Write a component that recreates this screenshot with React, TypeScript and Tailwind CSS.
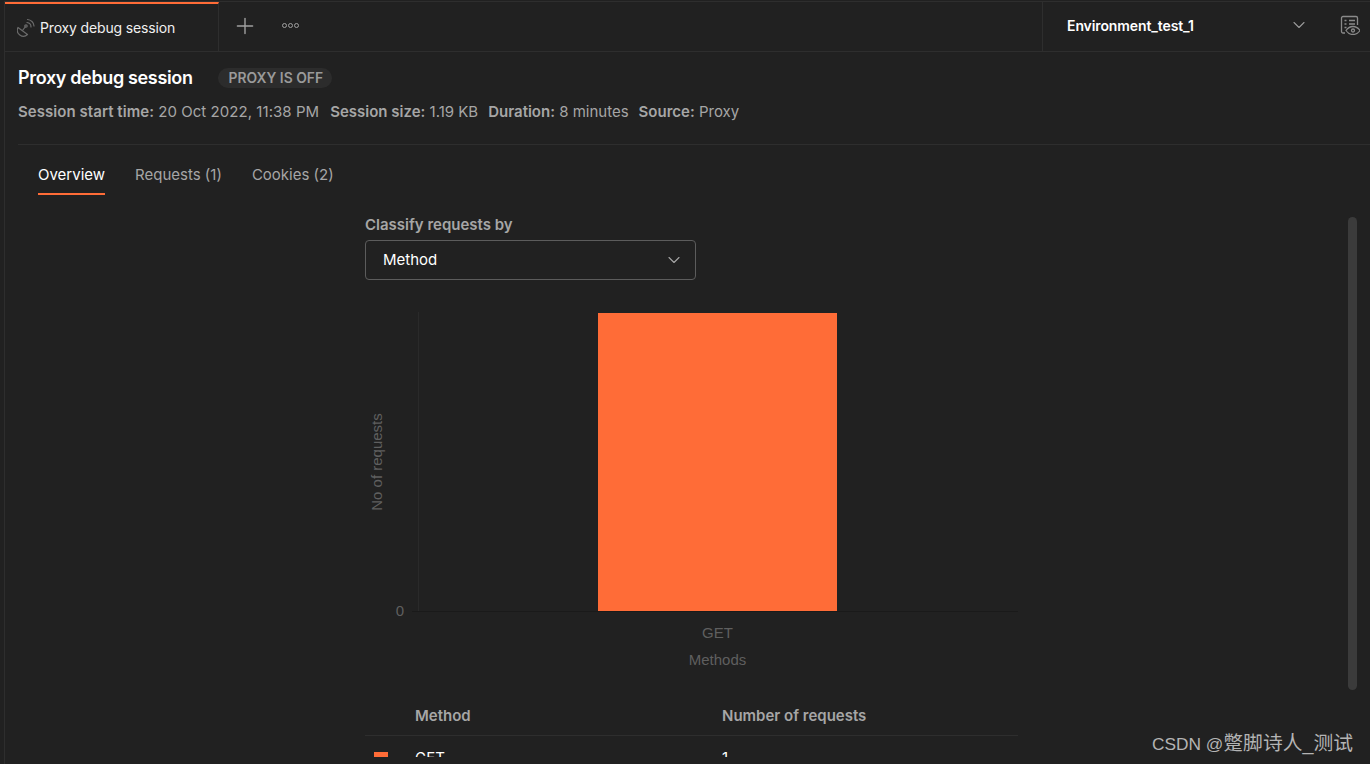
import React from 'react';
import { ChevronDown, Plus } from 'lucide-react';

const inter = { fontFamily: 'Inter, "Liberation Sans", sans-serif' };

const SatelliteIcon = () => (
  <svg width="20" height="20" viewBox="0 0 20 20" fill="none" stroke="#6b6b6b" strokeWidth="1.2">
    <path d="M1 9.500L10.500 16.500A6 6 0 0 1 1 9.500Z" strokeLinejoin="round" />
    <path d="M5.500 12.500l3-4" />
    <circle cx="9" cy="8" r="1.200" />
    <path d="M10 4.500a4.500 4.500 0 0 1 4 4.500M10.500 1.500a7 7 0 0 1 6.500 6.500" strokeLinecap="round" />
  </svg>
);

const EnvironmentEyeIcon = () => (
  <svg width="20" height="20" viewBox="0 0 20 20" fill="none" stroke="#8a8a8a" strokeWidth="1.3">
    <path d="M5 18H3a1.500 1.500 0 0 1-1.500-1.500V3A1.500 1.500 0 0 1 3 1.500h13A1.500 1.500 0 0 1 17.500 3v7" />
    <path d="M4.500 5.500h2M9 5.500h6M4.500 9h2M9 9h6M4.500 12.500h2" />
    <path d="M6 15.500c1.800-2.600 4.200-4 7-4s5.200 1.400 7 4c-1.800 2.600-4.200 4-7 4s-5.200-1.400-7-4Z" fill="#212121" />
    <circle cx="13" cy="15.500" r="1.500" />
  </svg>
);

const BarChart = () => (
  <svg width="653" height="372" viewBox="0 0 653 372" className="block" style={{ fontFamily: '"Liberation Sans", Arial, sans-serif' }}>
    <line x1="53.500" y1="10" x2="53.500" y2="309" stroke="#2a2a2a" />
    <line x1="47" y1="309.500" x2="653" y2="309.500" stroke="#1a1a1a" />
    <rect x="233" y="11" width="239" height="298" fill="#ff6c37" />
    <text x="35" y="314" textAnchor="middle" fontSize="15" fill="#5f5f5f">0</text>
    <text x="352.500" y="336" textAnchor="middle" fontSize="15" fill="#5f5f5f">GET</text>
    <text x="352.500" y="363" textAnchor="middle" fontSize="15" fill="#5f5f5f">Methods</text>
    <text transform="translate(17 160) rotate(-90)" textAnchor="middle" fontSize="15" fill="#5f5f5f">No of requests</text>
  </svg>
);

export default function App() {
  return (
    <div className="relative h-[764px] w-[1370px] overflow-hidden bg-[#212121] pl-[4px] pt-[1px] antialiased" style={inter}>
      <div className="h-[763px] border-l border-t border-[#2e2e2e]">
        <div className="relative h-[755px] overflow-hidden">
          {/* Top bar */}
          <div className="flex h-[50px] border-b border-[#2e2e2e]">
            <div className="flex h-[50px] w-[214px] items-center gap-[3px] border-r border-t-2 border-r-[#2e2e2e] border-t-[#ff6c37] pb-[1px] pl-[12px]">
              <SatelliteIcon />
              <span className="text-[14px] tracking-[-0.15px] text-[#f0f0f0]">Proxy debug session</span>
            </div>
            <div className="flex w-[823px] items-center pb-[2px] pl-[13px]">
              <Plus size={26} strokeWidth={1.3} className="text-[#a0a0a0]" />
              <div className="ml-[24px] flex gap-[1px]">
                <span className="h-[5px] w-[5px] rounded-full border border-[#a0a0a0]" />
                <span className="h-[5px] w-[5px] rounded-full border border-[#a0a0a0]" />
                <span className="h-[5px] w-[5px] rounded-full border border-[#a0a0a0]" />
              </div>
            </div>
            <div className="flex flex-1 items-center border-l border-[#2e2e2e] pb-[3px] pl-[24px]">
              <span className="w-[222px] text-[14px] font-semibold tracking-[-0.1px] text-white">Environment_test_1</span>
              <ChevronDown size={20} strokeWidth={1.3} className="text-[#9a9a9a]" />
              <div className="ml-[31px]">
                <EnvironmentEyeIcon />
              </div>
            </div>
          </div>

          {/* Session header */}
          <div className="pl-[13px]">
            <div className="flex items-center pt-[14px]">
              <h1 className="text-[18px] leading-[24px] font-semibold tracking-[-0.35px] text-white">Proxy debug session</h1>
              <span className="ml-[25px] rounded-full bg-[#2c2c2c] pl-[11px] pr-[9px] text-[13.850px] leading-[20px] font-semibold text-[#9a9a9a]">
                PROXY IS OFF
              </span>
            </div>
            <div className="mt-[12px] flex gap-[10px] text-[15px] leading-[20px] text-[#a6a6a6]">
              <p className="mr-[1px] tracking-[0.05px]"><span className="font-semibold">Session start time:</span> 20 Oct 2022, 11:38 PM</p>
              <p><span className="font-semibold">Session size:</span> 1.19 KB</p>
              <p><span className="font-semibold">Duration:</span> 8 minutes</p>
              <p><span className="font-semibold">Source:</span> Proxy</p>
            </div>
            <div className="mt-[22px] h-px bg-[#2e2e2e]" />

            {/* Tabs */}
            <div className="flex gap-[30px] pl-[20px] pt-[20px] text-[15px] leading-[20px]">
              <div className="border-b-2 border-[#ff6c37] pb-[8px] text-white">Overview</div>
              <div className="text-[#a6a6a6]">Requests (1)</div>
              <div className="text-[#a6a6a6]">Cookies (2)</div>
            </div>
          </div>

          {/* Overview */}
          <div className="ml-[360px] mt-[20px] w-[653px]">
            <div className="text-[15px] leading-[20px] font-semibold text-[#a6a6a6]">Classify requests by</div>
            <div className="mt-[5px] flex h-[40px] w-[331px] items-center justify-between rounded-[4px] border border-[#5c5c5c] pl-[17px] pr-[11px] text-[15px] text-white">
              Method
              <ChevronDown size={20} strokeWidth={1.3} className="text-[#a6a6a6]" />
            </div>
            <div className="mt-[22px]">
              <BarChart />
            </div>
            <div className="mt-[32px] grid grid-cols-[50px_307px_1fr] border-b border-[#2e2e2e] pb-[9px] text-[15px] leading-[20px] font-semibold text-[#a6a6a6]">
              <span />
              <span>Method</span>
              <span>Number of requests</span>
            </div>
            <div className="grid grid-cols-[50px_307px_1fr] pt-[12px] text-[15px] leading-[20px] text-white">
              <span className="ml-[9px] mt-[4px] h-[14px] w-[14px] bg-[#ff6c37]" />
              <span>GET</span>
              <span>1</span>
            </div>
          </div>

          {/* Scrollbar */}
          <div className="absolute left-[1343px] top-[215px] h-[473px] w-[9px] rounded-full bg-[#3b3b3b]" />
        </div>
      </div>

      {/* Watermark */}
      <div
        className="absolute left-[1152px] top-[729px] flex items-baseline leading-[28px] whitespace-pre text-[#b4b4b4]"
        style={{ fontFamily: '"Liberation Sans", "Noto Sans CJK SC", sans-serif' }}
      >
        <span className="text-[17.300px]">CSDN @</span>
        <span className="text-[19.800px]">蹩脚诗人_测试</span>
      </div>
    </div>
  );
}
